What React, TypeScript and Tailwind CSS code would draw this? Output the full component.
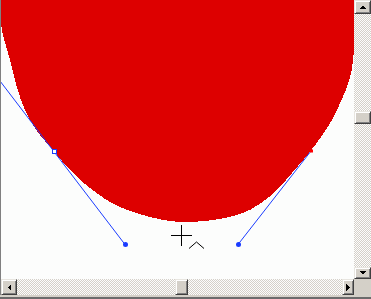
import React from 'react';

const track =
  'bg-[image:repeating-conic-gradient(#d4d0c8_0_25%,#fcfcfc_0_50%)] bg-[length:2px_2px]';
const bevel =
  'bg-[#d4d0c8] border border-t-[#e8e6e0] border-l-[#e8e6e0] border-b-[#404040] border-r-[#404040] shadow-[inset_1px_1px_#ffffff,inset_-1px_-1px_#808080]';

type Dir = 'up' | 'down' | 'left' | 'right';

const arrows: Record<Dir, string> = {
  up: '0,4 7,4 3.5,0.5',
  down: '0,0 7,0 3.5,3.5',
  left: '4,0 4,7 0.5,3.5',
  right: '0,0 0,7 3.5,3.5',
};

function ArrowButton({ dir, className }: { dir: Dir; className: string }) {
  const vertical = dir === 'up' || dir === 'down';
  return (
    <div className={`${bevel} ${className} flex items-center justify-center shrink-0`}>
      <svg
        width={vertical ? 7 : 4}
        height={vertical ? 4 : 7}
        viewBox={vertical ? '0 0 7 4' : '0 0 4 7'}
        shapeRendering="crispEdges"
      >
        <polygon points={arrows[dir]} fill="#000" />
      </svg>
    </div>
  );
}

// outline of the red blob, smoothed with a catmull-rom spline
const outline: number[][] = [
  [1, 0], [1, 22], [3, 35], [6, 46], [10, 60], [15, 80], [21, 100], [30, 120],
  [40, 135], [52, 149], [62, 161], [73, 172], [85, 184], [98, 194],
  [112, 203], [130, 211], [150, 217], [170, 221], [185, 222], [205, 221],
  [225, 218], [243, 213], [258, 205], [275, 192], [292, 173], [309, 153],
  [321, 137], [332, 120], [341, 101], [348, 84], [352, 68], [354, 45], [354, 0],
];

function spline(pts: number[][]) {
  let d = `M${pts[0][0]},${pts[0][1]}`;
  for (let i = 0; i < pts.length - 1; i++) {
    const p0 = pts[Math.max(i - 1, 0)];
    const p1 = pts[i];
    const p2 = pts[i + 1];
    const p3 = pts[Math.min(i + 2, pts.length - 1)];
    const c1x = p1[0] + (p2[0] - p0[0]) / 6;
    const c1y = p1[1] + (p2[1] - p0[1]) / 6;
    const c2x = p2[0] - (p3[0] - p1[0]) / 6;
    const c2y = p2[1] - (p3[1] - p1[1]) / 6;
    d += ` C${c1x.toFixed(1)},${c1y.toFixed(1)} ${c2x.toFixed(1)},${c2y.toFixed(1)} ${p2[0]},${p2[1]}`;
  }
  return d + ' Z';
}

const redPath = spline(outline);

function Canvas() {
  return (
    <div className="w-[353px] h-[279px] bg-[#fcfdfc] overflow-hidden">
      <svg width={353} height={279} viewBox="1 0 353 279" className="block">
        <path d={redPath} fill="#dd0000" shapeRendering="crispEdges" />
        <g stroke="#1a3cff" strokeWidth={1} fill="none">
          <line x1={0} y1={81} x2={125} y2={244.5} />
          <line x1={311} y1={151} x2={238} y2={244.5} />
        </g>
        <circle cx={125.5} cy={244.5} r={2.5} fill="#1a3cff" />
        <circle cx={238.5} cy={244.5} r={2.5} fill="#1a3cff" />
        <rect x={52.5} y={149.5} width={4} height={4} fill="#ffffff" stroke="#1a3cff" />
        <rect x={310} y={149.5} width={3} height={3} fill="#ff0000" />
        <g stroke="#000" strokeWidth={1} shapeRendering="crispEdges">
          <line x1={171} y1={235.5} x2={192} y2={235.5} />
          <line x1={181.5} y1={225} x2={181.5} y2={246} />
        </g>
        <polyline points="189,248.5 196.5,242 204,248.5" stroke="#000" strokeWidth={1} fill="none" />
      </svg>
    </div>
  );
}

export default function App() {
  return (
    <div className="w-[371px] h-[299px] flex flex-col bg-[#d4d0c8] overflow-hidden">
      <div className="flex h-[279px] border-l border-[#808080]">
        <Canvas />
        <div className="w-[17px] h-[279px] flex flex-col">
          <ArrowButton dir="up" className="h-[14px] w-full" />
          <div className={`${track} h-[97px]`} />
          <div className={`${bevel} h-[13px]`} />
          <div className={`${track} h-[143px]`} />
          <ArrowButton dir="down" className="h-[12px] w-full" />
        </div>
      </div>
      <div className="flex h-[16px] border-l border-[#808080]">
        <div className="w-[353px] flex">
          <ArrowButton dir="left" className="w-[16px] h-full" />
          <div className={`${track} w-[158px]`} />
          <div className={`${bevel} w-[13px]`} />
          <div className={`${track} w-[154px]`} />
          <ArrowButton dir="right" className="w-[12px] h-full" />
        </div>
        <div className="w-[17px] bg-[#d4d0c8]" />
      </div>
      <div className="h-[4px] flex flex-col">
        <div className="h-[2px] bg-[#d4d0c8]" />
        <div className="h-[2px] bg-[#6b6b6b]" />
      </div>
    </div>
  );
}
